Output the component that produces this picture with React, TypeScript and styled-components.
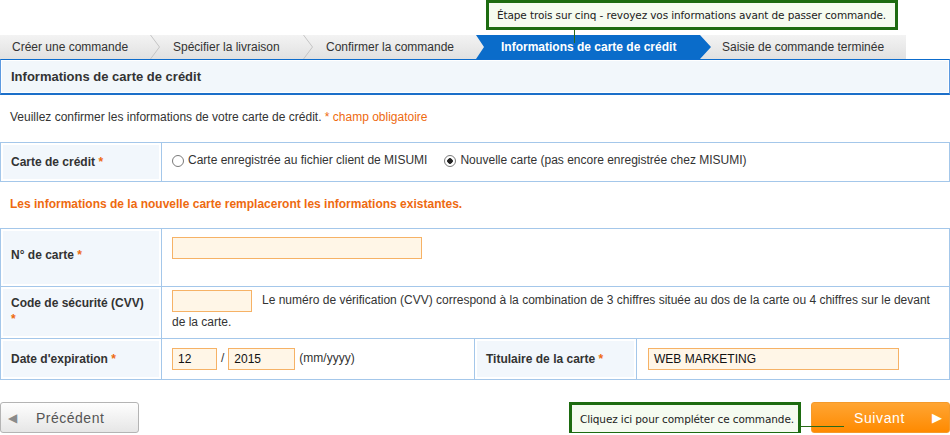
import React from 'react'
import styled, { createGlobalStyle } from 'styled-components'

const GlobalStyle = createGlobalStyle`
  body {
    margin: 0;
    background: #fff;
    color: #333;
    font-family: "Liberation Sans", Arial, sans-serif;
    font-size: 12px;
  }
`

//-----------------------------------------------------------------------------------------------
// layout
//-----------------------------------------------------------------------------------------------
const Page = styled.div`
  position: relative;
  width: 950px;
  padding-top: 35px;
`

const Callout = styled.div<{ $top: number; $left: number; $width: number }>`
  position: absolute;
  top: ${p => p.$top}px;
  left: ${p => p.$left}px;
  width: ${p => p.$width}px;
  height: 30px;
  box-sizing: border-box;
  border: 3px solid #1d6b10;
  background: #f5fbf0;
  color: #222;
  font-family: "DejaVu Sans", sans-serif;
  font-size: 10.5px;
  letter-spacing: -0.12px;
  display: flex;
  align-items: center;
  padding-left: 8px;
  white-space: nowrap;
  z-index: 2;
`

const StemDown = styled.div`
  position: absolute;
  top: 30px;
  left: 574px;
  width: 1px;
  height: 13px;
  background: #2a6a1a;
  z-index: 2;
`

//-----------------------------------------------------------------------------------------------
// step bar
//-----------------------------------------------------------------------------------------------
const StepBar = styled.div`
  display: flex;
  width: 906px;
  height: 24px;
  background: linear-gradient(#f3f3f3, #e1e1e1);
`

const Step = styled.div<{ $w: number; $pad: number; $active?: boolean }>`
  flex: none;
  width: ${p => p.$w}px;
  padding-left: ${p => p.$pad}px;
  box-sizing: border-box;
  display: flex;
  align-items: center;
  white-space: nowrap;
  color: ${p => (p.$active ? '#fff' : '#333')};
  font-weight: ${p => (p.$active ? 'bold' : 'normal')};
  background: ${p => (p.$active ? '#0a6cca' : 'transparent')};
  clip-path: ${p =>
    p.$active
      ? 'polygon(0 0, calc(100% - 11px) 0, 100% 50%, calc(100% - 11px) 100%, 0 100%, 8px 50%)'
      : 'none'};
`

const Chevron = () => (
  <svg width="10" height="24" viewBox="0 0 10 24" style={{ flex: 'none' }}>
    <polyline points="0.5,0 9.5,12 0.5,24" fill="none" stroke="#c4c4c4" strokeWidth="1" />
  </svg>
)

//-----------------------------------------------------------------------------------------------
// header + texts
//-----------------------------------------------------------------------------------------------
const SectionHeader = styled.div`
  height: 36px;
  box-sizing: border-box;
  border: 1px solid #5d9ae0;
  border-top-color: #0d6ccc;
  border-bottom: 2px solid #1b6fc9;
  box-shadow: inset 0 0 0 1px #fff;
  background: #f2f7fb;
  display: flex;
  align-items: center;
  padding-left: 10px;
  font-size: 13px;
  font-weight: bold;
  color: #333;
`

const Intro = styled.p`
  margin: 15px 0 18px;
  padding-left: 10px;
  line-height: 14px;
`

const Req = styled.span`
  color: #ee6a10;
`

const Warning = styled.p`
  margin: 15px 0 17px;
  padding-left: 10px;
  line-height: 14px;
  font-weight: bold;
  color: #ee6a10;
`

//-----------------------------------------------------------------------------------------------
// form tables
//-----------------------------------------------------------------------------------------------
const FormTable = styled.table`
  width: 950px;
  border-collapse: collapse;
  table-layout: fixed;
  td {
    border: 1px solid #a4c7ea;
  }
`

const Row = styled.tr<{ $h: number }>`
  height: ${p => p.$h}px;
`

const Label = styled.td<{ $pad?: number; $pb?: number }>`
  background: #f2f7fc;
  box-shadow: inset 0 0 0 2px #fff;
  padding: 0 16px ${p => p.$pb ?? 0}px ${p => p.$pad ?? 10}px;
  font-weight: bold;
  line-height: 16px;
  vertical-align: middle;
`

const Value = styled.td<{ $top?: boolean; $pt?: number; $pad?: number }>`
  padding: ${p => p.$pt ?? 0}px 10px 0 ${p => p.$pad ?? 10}px;
  vertical-align: ${p => (p.$top ? 'top' : 'middle')};
  line-height: 21px;
`

const RadioOption = styled.label`
  display: inline-flex;
  align-items: center;
  gap: 4px;
  margin-right: 17px;
`

const RadioDot = styled.span<{ $on?: boolean }>`
  width: 10px;
  height: 10px;
  border-radius: 50%;
  border: 1px solid #7a7a7a;
  background: radial-gradient(circle, ${p => (p.$on ? '#222 0 2.5px, #fff 3px' : '#fff 0')}, #fff);
  box-sizing: content-box;
  margin-top: 1px;
`

const Field = styled.span<{ $w: number }>`
  display: inline-block;
  width: ${p => p.$w}px;
  height: 22px;
  box-sizing: border-box;
  border: 1px solid #f6b266;
  background: #fff6e7;
  padding-left: 5px;
  line-height: 20px;
  color: #111;
  vertical-align: middle;
`

const Slash = styled.span`
  margin: 0 4px 0 4px;
`

const Hint = styled.span`
  margin-left: 4px;
`

const CvvText = styled.span`
  margin-left: 10px;
`

//-----------------------------------------------------------------------------------------------
// footer
//-----------------------------------------------------------------------------------------------
const Footer = styled.div`
  margin-top: 22px;
  display: flex;
  justify-content: space-between;
  align-items: flex-start;
`

const BackButton = styled.div`
  width: 139px;
  height: 31px;
  box-sizing: border-box;
  border: 1px solid #b4b4b4;
  border-radius: 3px;
  background: linear-gradient(#fefefe, #e6e6e6);
  display: flex;
  align-items: center;
  padding-left: 7px;
  color: #555;
  font-size: 14px;
  letter-spacing: 0.5px;
  span:first-child {
    color: #8a8a8a;
    font-size: 12px;
    width: 28px;
  }
`

const NextWrap = styled.div`
  position: relative;
`

const NextButton = styled.div`
  width: 139px;
  height: 31px;
  box-sizing: border-box;
  border: 1px solid #f59a2a;
  border-radius: 3px;
  background: linear-gradient(#ffa533, #ff8a00);
  display: flex;
  align-items: center;
  padding-left: 42px;
  color: #fff;
  font-size: 14px;
  letter-spacing: 0.6px;
  span:last-child {
    margin-left: auto;
    margin-right: 6px;
    font-size: 13px;
  }
`

const StemSide = styled.div`
  position: absolute;
  top: 24px;
  left: -10px;
  width: 43px;
  height: 1px;
  background: #2a6a1a;
  z-index: 2;
`

const BottomCallout = styled(Callout)`
  height: 33px;
`

//-----------------------------------------------------------------------------------------------
// App
//-----------------------------------------------------------------------------------------------
const App: React.FunctionComponent = () => {
  return (
    <>
      <GlobalStyle />
      <Page>
        <Callout $top={0} $left={486} $width={412}>
          Étape trois sur cinq - revoyez vos informations avant de passer commande.
        </Callout>
        <StemDown />

        <StepBar>
          <Step $w={150} $pad={12}>Créer une commande</Step>
          <Chevron />
          <Step $w={143} $pad={13}>Spécifier la livraison</Step>
          <Chevron />
          <Step $w={163} $pad={13}>Confirmer la commande</Step>
          <Step $w={235} $pad={25} $active>Informations de carte de crédit</Step>
          <Step $w={195} $pad={11}>Saisie de commande terminée</Step>
        </StepBar>

        <SectionHeader>Informations de carte de crédit</SectionHeader>

        <Intro>
          Veuillez confirmer les informations de votre carte de crédit. <Req>* champ obligatoire</Req>
        </Intro>

        <FormTable>
          <colgroup>
            <col style={{ width: 161 }} />
            <col />
          </colgroup>
          <tbody>
            <Row $h={39}>
              <Label>Carte de crédit <Req>*</Req></Label>
              <Value>
                <RadioOption><RadioDot />Carte enregistrée au fichier client de MISUMI</RadioOption>
                <RadioOption><RadioDot $on />Nouvelle carte (pas encore enregistrée chez MISUMI)</RadioOption>
              </Value>
            </Row>
          </tbody>
        </FormTable>

        <Warning>Les informations de la nouvelle carte remplaceront les informations existantes.</Warning>

        <FormTable>
          <colgroup>
            <col style={{ width: 161 }} />
            <col style={{ width: 313 }} />
            <col style={{ width: 162 }} />
            <col />
          </colgroup>
          <tbody>
            <Row $h={58}>
              <Label $pb={6}>N° de carte <Req>*</Req></Label>
              <Value colSpan={3} $top $pt={8}>
                <Field $w={250} />
              </Value>
            </Row>
            <Row $h={52}>
              <Label $pb={4}>Code de sécurité (CVV) <Req>*</Req></Label>
              <Value colSpan={3} $top $pt={3}>
                <Field $w={80} />
                <CvvText>
                  Le numéro de vérification (CVV) correspond à la combination de 3 chiffres située au dos de la carte ou 4 chiffres sur le devant de la carte.
                </CvvText>
              </Value>
            </Row>
            <Row $h={41}>
              <Label>Date d'expiration <Req>*</Req></Label>
              <Value>
                <Field $w={45}>12</Field>
                <Slash>/</Slash>
                <Field $w={67}>2015</Field>
                <Hint>(mm/yyyy)</Hint>
              </Value>
              <Label $pad={11}>Titulaire de la carte <Req>*</Req></Label>
              <Value $pad={11}>
                <Field $w={251}>WEB MARKETING</Field>
              </Value>
            </Row>
          </tbody>
        </FormTable>

        <Footer>
          <BackButton>
            <span>◀</span>
            <span>Précédent</span>
          </BackButton>
          <NextWrap>
            <BottomCallout $top={0} $left={-242} $width={232}>
              Cliquez ici pour compléter ce commande.
            </BottomCallout>
            <StemSide />
            <NextButton>
              <span>Suivant</span>
              <span>▶</span>
            </NextButton>
          </NextWrap>
        </Footer>
      </Page>
    </>
  )
}

export default App
